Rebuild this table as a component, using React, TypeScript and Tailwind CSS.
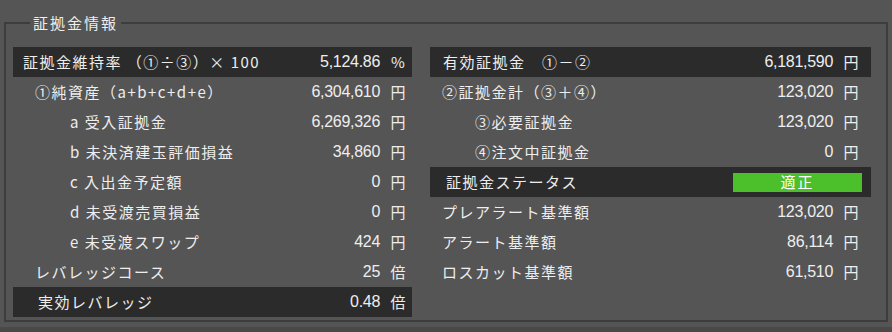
import React from "react";

type Line = {
  label: string;
  indent: string;
  value?: string;
  unit?: string;
  dark?: boolean;
  status?: string;
};

const jp = { fontFamily: '"Noto Sans CJK JP", sans-serif' };
const num = { fontFamily: '"Liberation Sans", Arial, sans-serif' };

const leftLines: Line[] = [
  { label: "証拠金維持率 （①÷③）× 100", indent: "pl-[10px]", value: "5,124.86", unit: "%", dark: true },
  { label: "①純資産（a+b+c+d+e）", indent: "pl-[22px]", value: "6,304,610", unit: "円" },
  { label: "a 受入証拠金", indent: "pl-[57px]", value: "6,269,326", unit: "円" },
  { label: "b 未決済建玉評価損益", indent: "pl-[57px]", value: "34,860", unit: "円" },
  { label: "c 入出金予定額", indent: "pl-[57px]", value: "0", unit: "円" },
  { label: "d 未受渡売買損益", indent: "pl-[57px]", value: "0", unit: "円" },
  { label: "e 未受渡スワップ", indent: "pl-[57px]", value: "424", unit: "円" },
  { label: "レバレッジコース", indent: "pl-[22px]", value: "25", unit: "倍" },
  { label: "実効レバレッジ", indent: "pl-[25px]", value: "0.48", unit: "倍", dark: true },
];

const rightLines: Line[] = [
  { label: "有効証拠金　①－②", indent: "pl-[13px]", value: "6,181,590", unit: "円", dark: true },
  { label: "②証拠金計（③＋④）", indent: "pl-[12px]", value: "123,020", unit: "円" },
  { label: "③必要証拠金", indent: "pl-[45px]", value: "123,020", unit: "円" },
  { label: "④注文中証拠金", indent: "pl-[45px]", value: "0", unit: "円" },
  { label: "証拠金ステータス", indent: "pl-[16px]", status: "適正", dark: true },
  { label: "プレアラート基準額", indent: "pl-[12px]", value: "123,020", unit: "円" },
  { label: "アラート基準額", indent: "pl-[12px]", value: "86,114", unit: "円" },
  { label: "ロスカット基準額", indent: "pl-[12px]", value: "61,510", unit: "円" },
];

function InfoRow({ line, pr }: { line: Line; pr: string }) {
  return (
    <div
      className={`flex items-center h-[30px] ${line.indent} ${pr} ${
        line.dark ? "bg-[#2b2b2b]" : ""
      }`}
    >
      <span className="flex-1 text-[15px] tracking-[1.5px] whitespace-nowrap" style={jp}>
        {line.label}
      </span>
      {line.status ? (
        <span
          className="w-[129px] h-[19px] mr-[-3px] bg-[#4cc02a] flex items-center justify-center text-[15px] tracking-[2px] text-white"
          style={jp}
        >
          {line.status}
        </span>
      ) : (
        <>
          <span className="text-[16px] tracking-[-0.3px]" style={num}>
            {line.value}
          </span>
          <span className="w-[16px] ml-[10px] text-[15px] text-center" style={jp}>
            {line.unit}
          </span>
        </>
      )}
    </div>
  );
}

export default function App() {
  return (
    <div className="w-[892px] h-[332px] bg-[#555555] text-[#eeeeee] flex flex-col overflow-hidden">
      <div className="px-[4px] pt-[13px]">
        {/* group box */}
        <fieldset className="border-2 border-[#3d3d3d] px-[7px] pt-[14px] pb-[3px]">
          <legend
            className="ml-[17px] px-[3px] text-[15px] leading-[20px] tracking-[2px]"
            style={jp}
          >
            証拠金情報
          </legend>
          <div className="flex gap-[18px]">
            <div className="w-[399px] flex flex-col">
              {leftLines.map((l) => (
                <InfoRow key={l.label} line={l} pr="pr-[6px]" />
              ))}
            </div>
            <div className="w-[441px] flex flex-col">
              {rightLines.map((l) => (
                <InfoRow key={l.label} line={l} pr="pr-[12px]" />
              ))}
            </div>
          </div>
        </fieldset>
      </div>
      <div className="mt-auto h-[5px] bg-[#494949]" />
    </div>
  );
}
